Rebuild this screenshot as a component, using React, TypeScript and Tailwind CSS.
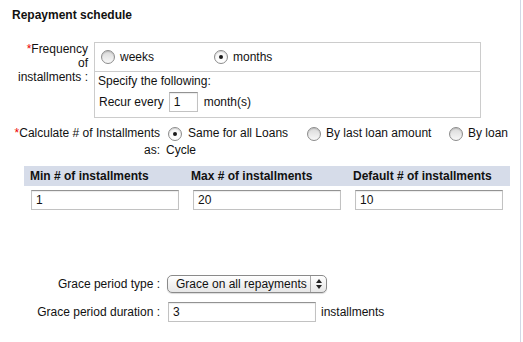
import React from "react";

function Radio({ checked = false }: { checked?: boolean }) {
  return (
    <span
      className={
        "flex items-center justify-center w-[14px] h-[14px] shrink-0 rounded-full border border-[#8c8c8c] shadow-[inset_0_1px_1px_rgba(0,0,0,0.15)] " +
        (checked
          ? "bg-gradient-to-b from-[#f4f4f4] to-white"
          : "bg-gradient-to-b from-[#d9d9d9] to-[#f8f8f8]")
      }
    >
      {checked && <span className="block w-[4px] h-[4px] rounded-full bg-[#1a1a1a]" />}
    </span>
  );
}

function TextBox({ value, className }: { value: string; className: string }) {
  return (
    <div
      className={
        "flex items-center h-[20px] pl-[4px] bg-white border border-[#c2c2c2] border-t-[#939393] shadow-[inset_0_1px_1px_rgba(0,0,0,0.08)] " +
        className
      }
    >
      {value}
    </div>
  );
}

export default function App() {
  return (
    <div className="flex w-[523px] h-[342px] bg-white text-[12px] leading-[14px] text-[#111] font-['Liberation_Sans',Arial,sans-serif] overflow-hidden">
      <div className="w-[520px] shrink-0 pt-[8px] pl-[12px]">
        <h3 className="font-bold h-[14px]">Repayment schedule</h3>

        {/* frequency */}
        <div className="flex mt-[20px]">
          <div className="w-[76px] shrink-0 text-right">
            <span className="text-[#e00]">*</span>Frequency
            <br />
            of
            <br />
            installments :
          </div>
          <div className="ml-[6px] w-[387px] border border-[#cccccc]">
            <div className="flex items-center h-[29px] pl-[6px] border-b border-[#cccccc]">
              <div className="flex items-center gap-[5px] w-[113px]">
                <Radio />
                <span>weeks</span>
              </div>
              <div className="flex items-center gap-[5px]">
                <Radio checked />
                <span>months</span>
              </div>
            </div>
            <div className="pt-[2px] pb-[5px] pl-[3px]">
              <p className="h-[14px]">Specify the following:</p>
              <div className="flex items-center mt-[4px] pl-[1px]">
                <span>Recur every</span>
                <TextBox value="1" className="w-[29px] ml-[5px]" />
                <span className="ml-[6px]">month(s)</span>
              </div>
            </div>
          </div>
        </div>

        {/* calculate installments */}
        <div className="flex mt-[7px] leading-[17px]">
          <div className="w-[148px] shrink-0 text-right">
            <span className="text-[#e00]">*</span>Calculate # of Installments
            <br />
            as:
          </div>
          <div className="ml-[6px]">
            <div className="flex items-center h-[17px] pl-[2px]">
              <div className="flex items-center gap-[6px] w-[139px]">
                <Radio checked />
                <span>Same for all Loans</span>
              </div>
              <div className="flex items-center gap-[5px] w-[142px]">
                <Radio />
                <span>By last loan amount</span>
              </div>
              <div className="flex items-center gap-[5px]">
                <Radio />
                <span>By loan</span>
              </div>
            </div>
            <div className="h-[17px]">Cycle</div>
          </div>
        </div>

        {/* min / max / default */}
        <div className="ml-[12px] w-[486px] mt-[7px]">
          <div className="grid grid-cols-3 h-[20px] items-center bg-[#d6dce9] font-bold">
            <span className="pl-[6px]">Min # of installments</span>
            <span className="pl-[5px]">Max # of installments</span>
            <span className="pl-[5px]">Default # of installments</span>
          </div>
          <div className="grid grid-cols-3 mt-[4px]">
            <TextBox value="1" className="w-[148px] ml-[7px]" />
            <TextBox value="20" className="w-[148px] ml-[7px]" />
            <TextBox value="10" className="w-[148px] ml-[7px]" />
          </div>
        </div>

        {/* grace period */}
        <div className="flex items-center mt-[65px] h-[18px]">
          <div className="w-[148px] shrink-0 text-right">Grace period type :</div>
          <div className="ml-[7px] flex items-center w-[160px] h-[18px] rounded-[5px] border border-[#8a8a8a] bg-gradient-to-b from-white to-[#e6e6e6] shadow-[0_1px_1px_rgba(0,0,0,0.15)]">
            <span className="flex-1 pl-[8px] whitespace-nowrap overflow-hidden">Grace on all repayments</span>
            <span className="flex items-center justify-center w-[16px] h-full border-l border-[#a8a8a8]">
              <svg width="6" height="10" viewBox="0 0 6 10">
                <path d="M3 0 L6 4 L0 4 Z" fill="#222" />
                <path d="M0 6 L6 6 L3 10 Z" fill="#222" />
              </svg>
            </span>
          </div>
        </div>
        <div className="flex items-center mt-[9px]">
          <div className="w-[148px] shrink-0 text-right">Grace period duration :</div>
          <TextBox value="3" className="w-[148px] ml-[8px]" />
          <span className="ml-[5px]">installments</span>
        </div>
      </div>
      <div className="w-px h-full bg-[#d2d8e6]" />
    </div>
  );
}
